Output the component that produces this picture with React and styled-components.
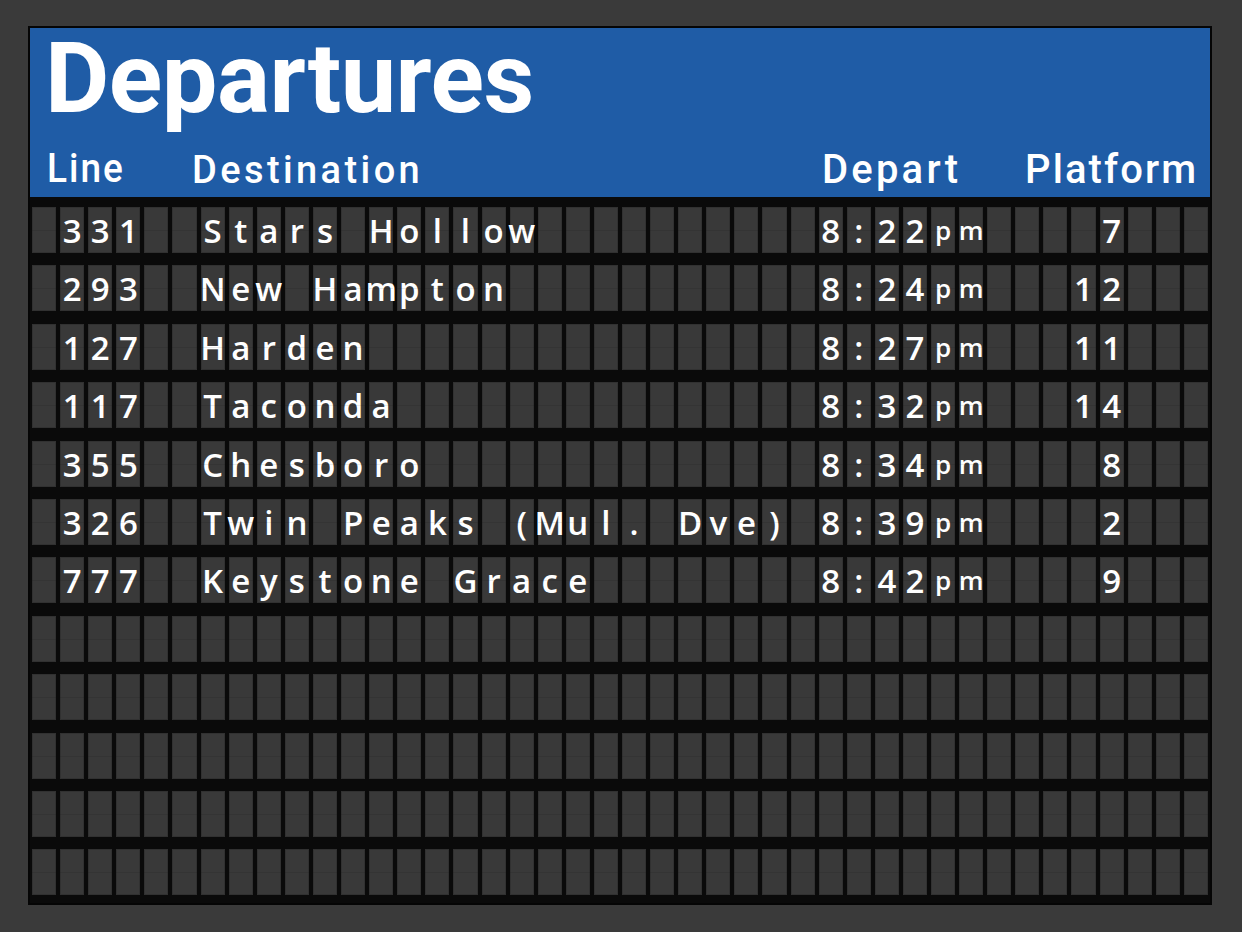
import React from 'react';
import styled, { createGlobalStyle } from 'styled-components';

const COLS = 42;

const departures = [
  { line: '331', dest: 'Stars Hollow', time: '8:22', platform: '7' },
  { line: '293', dest: 'New Hampton', time: '8:24', platform: '12' },
  { line: '127', dest: 'Harden', time: '8:27', platform: '11' },
  { line: '117', dest: 'Taconda', time: '8:32', platform: '14' },
  { line: '355', dest: 'Chesboro', time: '8:34', platform: '8' },
  { line: '326', dest: 'Twin Peaks (Mul. Dve)', time: '8:39', platform: '2' },
  { line: '777', dest: 'Keystone Grace', time: '8:42', platform: '9' },
];

const TOTAL_ROWS = 12;

const GlobalStyle = createGlobalStyle`
  html, body {
    margin: 0;
    padding: 0;
    background: #3a3a3a;
  }
  body {
    font-family: "Open Sans", "DejaVu Sans", sans-serif;
  }
`;

const Page = styled.div`
  width: 1242px;
  height: 932px;
  padding: 26px 0 0 28px;
  box-sizing: border-box;
`;

const Board = styled.div`
  width: 1184px;
  height: 879px;
  box-sizing: border-box;
  border: 2px solid #050505;
  background: #0a0a0a;
  display: flex;
  flex-direction: column;
`;

const Header = styled.div`
  background: #1f5ca6;
  height: 169px;
  flex: none;
  font-family: Roboto, "Liberation Sans", sans-serif;
  color: #fff;
`;

const Title = styled.h1`
  margin: 0;
  padding: 2px 0 0 15px;
  font-size: 99px;
  font-weight: 700;
  line-height: 96px;
  letter-spacing: -0.5px;
`;

const ColumnHeads = styled.div`
  display: flex;
  align-items: baseline;
  padding: 20px 0 0 0;
  height: 44px;
`;

const ColHead = styled.span`
  display: inline-block;
  box-sizing: border-box;
  flex: none;
  font-size: ${(p) => p.$size || 40}px;
  font-weight: 500;
  letter-spacing: ${(p) => p.$spacing || 0.5}px;
  width: ${(p) => (p.$width ? `${p.$width}px` : 'auto')};
  padding-left: ${(p) => p.$left || 0}px;
  transform: scaleY(${(p) => p.$stretch || 1});
  transform-origin: bottom left;
`;

const Rows = styled.div`
  flex: 1;
  display: flex;
  flex-direction: column;
  gap: 12.4px;
  padding: 10px 2px 0 2px;
`;

const Row = styled.div`
  display: flex;
  gap: 4px;
  height: 46px;
`;

const Cell = styled.div`
  flex: 1;
  min-width: 0;
  background: #393939;
  box-shadow: inset 0 0 0 1px #313131;
  position: relative;
  display: flex;
  align-items: center;
  justify-content: center;
  color: #fff;
  font-family: "Open Sans", "DejaVu Sans", sans-serif;
  font-weight: 600;
  font-size: ${(p) => (p.$small ? 26 : 33)}px;
  line-height: 1;
  padding-top: ${(p) => (p.$small ? 0 : 1)}px;
  &::after {
    content: '';
    position: absolute;
    left: 0;
    right: 0;
    top: 50%;
    height: 1px;
    background: rgba(0, 0, 0, 0.08);
  }
`;

function buildRow(d) {
  const chars = Array(COLS).fill(' ');
  const small = Array(COLS).fill(false);
  if (!d) return { chars, small };
  const put = (start, str, isSmall) => {
    [...str].forEach((c, i) => {
      chars[start + i] = c;
      small[start + i] = !!isSmall;
    });
  };
  put(1, d.line);
  put(6, d.dest);
  put(28, d.time);
  put(32, 'pm', true);
  put(39 - d.platform.length, d.platform);
  return { chars, small };
}

const App = () => {
  const rows = Array.from({ length: TOTAL_ROWS }, (_, i) => buildRow(departures[i]));
  return (
    <Page>
      <GlobalStyle />
      <Board>
        <Header>
          <Title>Departures</Title>
          <ColumnHeads>
            <ColHead $left={17} $width={162} $size={37} $spacing={2} $stretch={1.12}>Line</ColHead>
            <ColHead $width={630} $size={38} $spacing={3.4}>Destination</ColHead>
            <ColHead $width={203} $size={40} $spacing={3.2}>Depart</ColHead>
            <ColHead $size={40} $spacing={2.1}>Platform</ColHead>
          </ColumnHeads>
        </Header>
        <Rows>
          {rows.map((r, i) => (
            <Row key={i}>
              {r.chars.map((c, j) => (
                <Cell key={j} $small={r.small[j]}>
                  {c === ' ' ? '' : c}
                </Cell>
              ))}
            </Row>
          ))}
        </Rows>
      </Board>
    </Page>
  );
};

export default App;
